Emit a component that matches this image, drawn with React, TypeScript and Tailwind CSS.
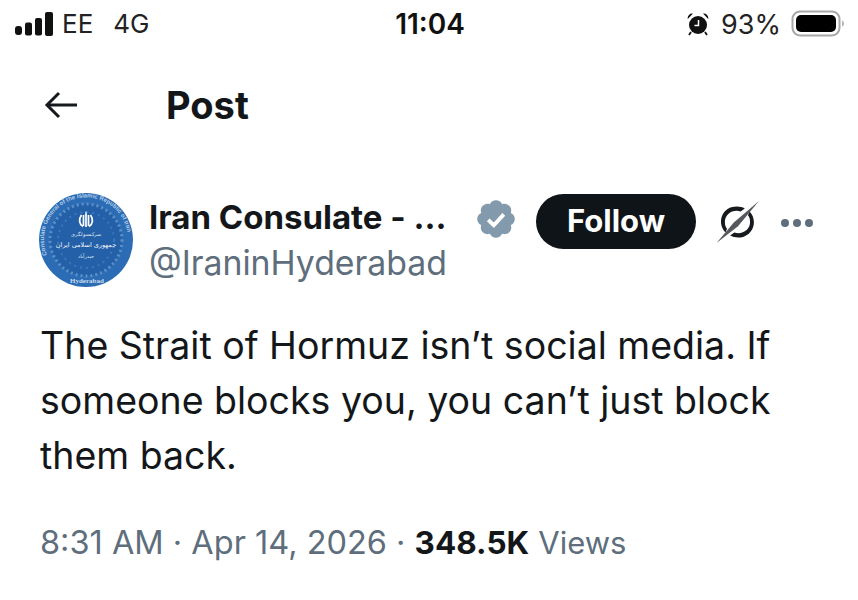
import React from "react";

const Signal = () => (
  <svg width="38" height="24" viewBox="0 0 38 24" fill="#111" className="shrink-0">
    <rect x="0" y="14" width="7" height="9" rx="3" />
    <rect x="10" y="10.500" width="7" height="13" rx="2" />
    <rect x="20" y="6" width="7" height="17.500" rx="2" />
    <rect x="30" y="0" width="8" height="24" rx="2" />
  </svg>
);

const Alarm = () => (
  <svg width="22" height="24" viewBox="0 0 22 24" className="shrink-0">
    <circle cx="11" cy="13" r="9" fill="#111" />
    <path d="M0.800 7 L6 1.600 A4.500 4.500 0 0 0 0.800 7Z M21.200 7 L16 1.600 A4.500 4.500 0 0 1 21.200 7Z" fill="#111" />
    <path d="M4 20l-2 3M18 20l2 3" stroke="#111" strokeWidth="1.800" />
    <path d="M11.500 8v5.500H7.500" stroke="#fff" strokeWidth="1.500" fill="none" />
  </svg>
);

const Battery = () => (
  <svg width="54" height="28" viewBox="0 0 54 28" className="shrink-0">
    <rect x="1.500" y="1.500" width="47" height="24" rx="7.500" fill="none" stroke="#a8a8a8" strokeWidth="2" />
    <rect x="5" y="5" width="40" height="17" rx="5" fill="#000" />
    <path d="M51 10.500c1.500.5 2 1.500 2 3s-.5 2.500-2 3z" fill="#b5b5b5" />
  </svg>
);

const Back = () => (
  <svg width="33" height="28" viewBox="0 0 33 28" fill="none" stroke="#16191d" strokeWidth="3" className="shrink-0">
    <path d="M33 14H3" />
    <path d="M15 2L3 14l12 12" />
  </svg>
);

const Avatar = () => (
  <svg width="94" height="94" viewBox="0 0 94 94" className="shrink-0 -mt-[1px]">
    <defs>
      <path id="arcTop" d="M8 62A42 42 0 1 1 86 62" />
    </defs>
    <circle cx="47" cy="47" r="47" fill="#2c6cb4" />
    <circle cx="47" cy="47" r="36" fill="#2460a8" />
    <circle cx="47" cy="47" r="36" fill="none" stroke="#5d90c8" strokeWidth="3" strokeDasharray="2 3" />
    <circle cx="47" cy="47" r="28" fill="none" stroke="#3a78bd" strokeWidth="2" strokeDasharray="2 4" />
    <text fontSize="6" fill="#b4cde9" fontFamily="Liberation Sans, sans-serif" fontWeight="700">
      <textPath href="#arcTop">Consulate General of the Islamic Republic of Iran</textPath>
    </text>
    <text fontSize="7" fill="#c8dbef" fontFamily="Liberation Serif, serif" fontWeight="700" x="31" y="90">Hyderabad</text>
    <path d="M47 18c-1 2-1 3 0 4 1-1 1-2 0-4z" fill="#fff" />
    <path d="M47 21v13M42.500 22c-3 4-2.500 9 1.500 11.500M51.500 22c3 4 2.500 9-1.500 11.500M44.500 22v11M49.500 22v11" stroke="#fff" strokeWidth="1.700" fill="none" />
    <text x="47" y="43" textAnchor="middle" fontSize="5" fill="#e8f0f8" fontFamily="Noto Sans, sans-serif">سرکنسولگری</text>
    <text x="47" y="54" textAnchor="middle" fontSize="6.500" fill="#f2f6fb" fontFamily="DejaVu Sans, sans-serif">جمهوری اسلامی ایران</text>
    <text x="47" y="65" textAnchor="middle" fontSize="5" fill="#dce8f4" fontFamily="DejaVu Sans, sans-serif">حیدرآباد</text>
  </svg>
);

const Verified = () => (
  <svg width="44" height="44" viewBox="0 0 22 22" className="shrink-0">
    <path
      fill="#829aab"
      d="M20.396 11c-.018-.646-.215-1.275-.57-1.816-.354-.54-.852-.972-1.438-1.246.223-.607.27-1.264.14-1.897-.131-.634-.437-1.218-.882-1.687-.47-.445-1.053-.75-1.687-.882-.633-.13-1.29-.083-1.897.14-.273-.587-.704-1.086-1.245-1.44S11.647 1.62 11 1.604c-.646.017-1.273.213-1.813.568s-.969.854-1.240 1.440c-.608-.223-1.267-.272-1.902-.14-.635.130-1.220.436-1.690.882-.445.470-.749 1.055-.878 1.688-.13.633-.08 1.290.144 1.896-.587.274-1.087.705-1.443 1.245-.356.540-.555 1.170-.574 1.817.020.647.218 1.276.574 1.817.356.540.856.972 1.443 1.245-.224.606-.274 1.263-.144 1.896.130.634.433 1.218.877 1.688.470.443 1.054.747 1.687.878.633.132 1.290.084 1.897-.136.274.586.705 1.084 1.246 1.439.540.354 1.170.551 1.816.569.647-.016 1.276-.213 1.817-.567s.972-.854 1.245-1.440c.604.239 1.266.296 1.903.164.636-.132 1.220-.447 1.680-.907.460-.460.776-1.044.908-1.681s.075-1.299-.165-1.903c.586-.274 1.084-.705 1.439-1.246.354-.540.551-1.170.569-1.816z"
    />
    <path d="M7.100 11.400l2.800 2.700 5-5.400" fill="none" stroke="#fff" strokeWidth="1.900" />
  </svg>
);

const Grok = () => (
  <svg width="44" height="44" viewBox="0 0 42 42" className="shrink-0">
    <path d="M9 31C1.500 23 4.500 10.500 14.500 7c4.500-1.500 9.500-1 13 1l-4 3C16.500 8.500 8 13.500 8.500 21.500c0 2.500.7 4.500 2 6z" fill="#16191d" />
    <path d="M32 11c7.500 8 4.500 20.500-5.500 24-4.500 1.500-9.500 1-13-1l4-3c7 2.500 15.500-2.500 15-10.500 0-2.500-.7-4.500-2-6z" fill="#16191d" />
    <path d="M41 1 L17 21.500 L0.500 41 L21 25 Z" fill="#55585d" />
  </svg>
);

export default function App() {
  return (
    <div
      className="w-[858px] h-[600px] overflow-hidden bg-white text-[#14171a] flex flex-col"
      style={{ fontFamily: "Inter, 'Liberation Sans', sans-serif" }}
    >
      <div className="h-[48px] flex items-center justify-between pl-[15px] pr-[13px] text-[26px] leading-none text-[#222]">
        <div className="flex items-center w-[300px]">
          <Signal />
          <span className="ml-[9px]">EE</span>
          <span className="ml-[20px]">4G</span>
        </div>
        <span className="font-semibold text-[28px] text-[#111]">11:04</span>
        <div className="flex items-center w-[300px] justify-end">
          <Alarm />
          <span className="ml-[12px] text-[27px]">93%</span>
          <span className="ml-[10px]"><Battery /></span>
        </div>
      </div>

      <div className="h-[72px] mt-[21px] flex items-center pl-[44px]">
        <Back />
        <span className="ml-[89px] text-[38px] font-bold leading-none text-[#14171a]">Post</span>
      </div>

      <div className="mt-[53px] flex items-start pl-[39px]">
        <Avatar />
        <div className="ml-[16px] w-[325px] flex flex-col">
          <div className="text-[33px] font-bold leading-[46px] whitespace-nowrap">Iran Consulate - ...</div>
          <div className="text-[33.800px] leading-[46px] text-[#5e6e7c] whitespace-nowrap">@IraninHyderabad</div>
        </div>
        <div className="flex items-center">
          <div className="-mt-[5px]"><Verified /></div>
          <div className="ml-[18px] w-[160px] h-[55px] rounded-full bg-[#0f1419] text-white text-[31px] font-bold flex items-center justify-center">Follow</div>
          <div className="ml-[20px]"><Grok /></div>
          <div className="ml-[21px] flex gap-[4px] mt-[2px]">
            <span className="w-[8px] h-[8px] rounded-full bg-[#5e6e7c]" />
            <span className="w-[8px] h-[8px] rounded-full bg-[#5e6e7c]" />
            <span className="w-[8px] h-[8px] rounded-full bg-[#5e6e7c]" />
          </div>
        </div>
      </div>

      <div className="mt-[31px] pl-[40px] text-[37.500px] leading-[55px] text-[#14171a]">
        <div className="whitespace-nowrap">The Strait of Hormuz isn’t social media. If</div>
        <div className="whitespace-nowrap">someone blocks you, you can’t just block</div>
        <div className="whitespace-nowrap">them back.</div>
      </div>

      <div className="mt-[38px] pl-[40px] text-[32.500px] leading-[44px] text-[#5e6e7c] whitespace-nowrap">
        8:31 AM · Apr 14, 2026 · <span className="font-bold text-[31.500px] text-[#14171a]">348.5K</span> <span className="text-[31px]">Views</span>
      </div>
    </div>
  );
}
